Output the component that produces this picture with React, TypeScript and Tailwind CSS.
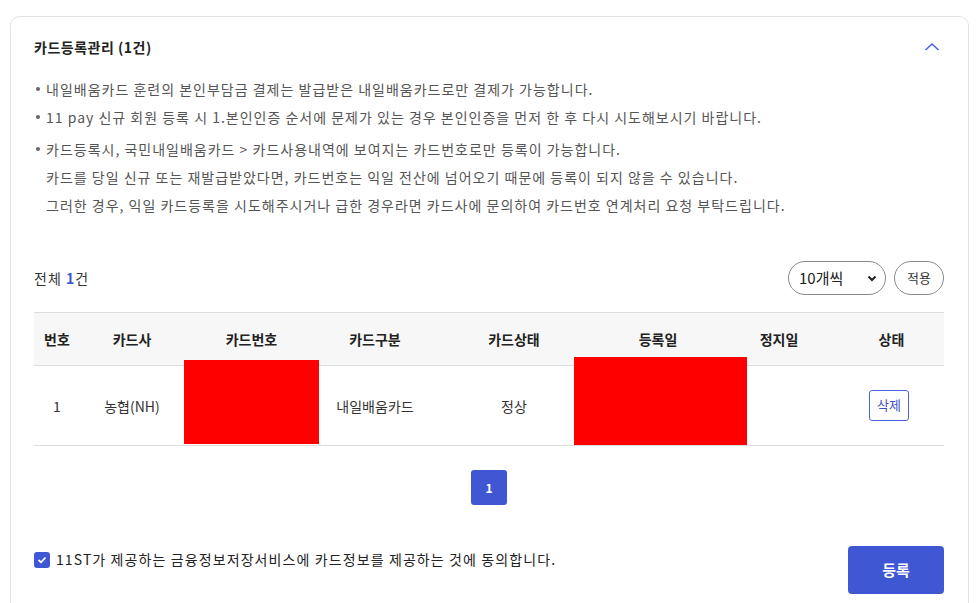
import React from 'react';

const COLS = [
  { label: '번호', w: 'w-[46px]' },
  { label: '카드사', w: 'w-[104px]' },
  { label: '카드번호', w: 'w-[135px]' },
  { label: '카드구분', w: 'w-[112px]' },
  { label: '카드상태', w: 'w-[166px]' },
  { label: '등록일', w: 'w-[122px]' },
  { label: '정지일', w: 'w-[120px]' },
  { label: '상태', w: 'w-[105px]' },
];

const Bullet: React.FC<{ className?: string; lines: string[] }> = ({ className = '', lines }) => (
  <li className={`flex ${className}`}>
    <span className="w-3 shrink-0 flex pt-[12px] pl-[2px]">
      <span className="w-[4px] h-[4px] rounded-full bg-[#666]" />
    </span>
    <div>
      {lines.map((l, i) => (
        <p key={i} className="leading-7">{l}</p>
      ))}
    </div>
  </li>
);

const App: React.FC = () => {
  return (
    <div className="min-h-screen bg-white pt-4 pl-[10px] pr-[7px] font-['Noto_Sans_CJK_KR','Noto_Sans',sans-serif] text-[#222]">
      <div className="border border-[#e2e2e2] rounded-[10px] pl-[23px] pr-6 pt-5 pb-10">
        {/* header */}
        <div className="flex items-center justify-between">
          <h2 className="text-sm font-bold leading-5 tracking-[0.5px]">카드등록관리 (1건)</h2>
          <button className="mr-[4px]">
            <svg width="16" height="10" viewBox="0 0 16 10" fill="none">
              <polyline points="1.5,8 8,2 14.5,8" stroke="#4a63e0" strokeWidth="1.6" />
            </svg>
          </button>
        </div>

        {/* notices */}
        <ul className="mt-[18px] text-sm tracking-[1px] text-[#555]">
          <Bullet lines={['내일배움카드 훈련의 본인부담금 결제는 발급받은 내일배움카드로만 결제가 가능합니다.']} />
          <Bullet lines={['11 pay 신규 회원 등록 시 1.본인인증 순서에 문제가 있는 경우 본인인증을 먼저 한 후 다시 시도해보시기 바랍니다.']} />
          <Bullet
            className="mt-1"
            lines={[
              '카드등록시, 국민내일배움카드 > 카드사용내역에 보여지는 카드번호로만 등록이 가능합니다.',
              '카드를 당일 신규 또는 재발급받았다면, 카드번호는 익일 전산에 넘어오기 때문에 등록이 되지 않을 수 있습니다.',
              '그러한 경우, 익일 카드등록을 시도해주시거나 급한 경우라면 카드사에 문의하여 카드번호 연계처리 요청 부탁드립니다.',
            ]}
          />
        </ul>

        {/* list controls */}
        <div className="mt-[42px] flex items-center justify-between h-[34px]">
          <p className="text-sm tracking-[1px] text-[#333]">
            전체 <span className="font-bold text-[#3f57d3]">1</span>건
          </p>
          <div className="flex items-center gap-2">
            <div className="w-[98px] h-[34px] border border-[#8a8a8a] rounded-full flex items-center justify-between pl-[10px] pr-[8px] text-[15px] text-[#222]">
              <span>10개씩</span>
              <svg width="10" height="7" viewBox="0 0 10 7" fill="none">
                <polyline points="1.5,1.5 5,5 8.5,1.5" stroke="#222" strokeWidth="2" />
              </svg>
            </div>
            <button className="w-[50px] h-[34px] border border-[#8a8a8a] rounded-full text-[13px] text-[#333]">적용</button>
          </div>
        </div>

        {/* table */}
        <div className="relative mt-[17px]">
          <table className="w-full table-fixed border-collapse text-sm text-[#333]">
            <colgroup>
              {COLS.map((c) => (
                <col key={c.label} className={c.w} />
              ))}
            </colgroup>
            <thead>
              <tr className="bg-[#f7f7f7] border-t border-b border-[#dcdcdc] h-[53px]">
                {COLS.map((c) => (
                  <th key={c.label} className="font-bold text-[#222] text-center">{c.label}</th>
                ))}
              </tr>
            </thead>
            <tbody>
              <tr className="h-[80px] border-b border-[#dcdcdc] text-center">
                <td>1</td>
                <td>농협(NH)</td>
                <td></td>
                <td>내일배움카드</td>
                <td>정상</td>
                <td></td>
                <td></td>
                <td>
                  <button className="w-10 h-[31px] mr-[5px] border border-[#4a63e0] rounded-[3px] text-[13px] text-[#3f4fc8]">삭제</button>
                </td>
              </tr>
            </tbody>
          </table>
          {/* redacted fields */}
          <div className="absolute left-[150px] top-[48px] w-[135px] h-[84px] bg-[#ff0000]" />
          <div className="absolute left-[540px] top-[45px] w-[173px] h-[88px] bg-[#ff0000]" />
        </div>

        {/* pagination */}
        <div className="mt-[24px] flex justify-center">
          <button className="w-9 h-[35px] rounded-[3px] bg-[#3f57d3] text-white text-[12px] font-bold">1</button>
        </div>

        {/* consent */}
        <div className="mt-[41px] flex items-start justify-between">
          <label className="flex items-center gap-[6px] mt-[3px] text-[14px] tracking-[1.1px] text-[#222]">
            <span className="w-4 h-4 rounded-[3px] bg-[#3f57d3] flex items-center justify-center">
              <svg width="10" height="8" viewBox="0 0 10 8" fill="none">
                <polyline points="1.5,4 4,6.3 8.5,1.5" stroke="white" strokeWidth="1.8" />
              </svg>
            </span>
            11ST가 제공하는 금융정보저장서비스에 카드정보를 제공하는 것에 동의합니다.
          </label>
          <button className="w-24 h-12 rounded-[4px] bg-[#3f57d3] text-white text-[15px] font-bold">등록</button>
        </div>
      </div>
    </div>
  );
};

export default App;
